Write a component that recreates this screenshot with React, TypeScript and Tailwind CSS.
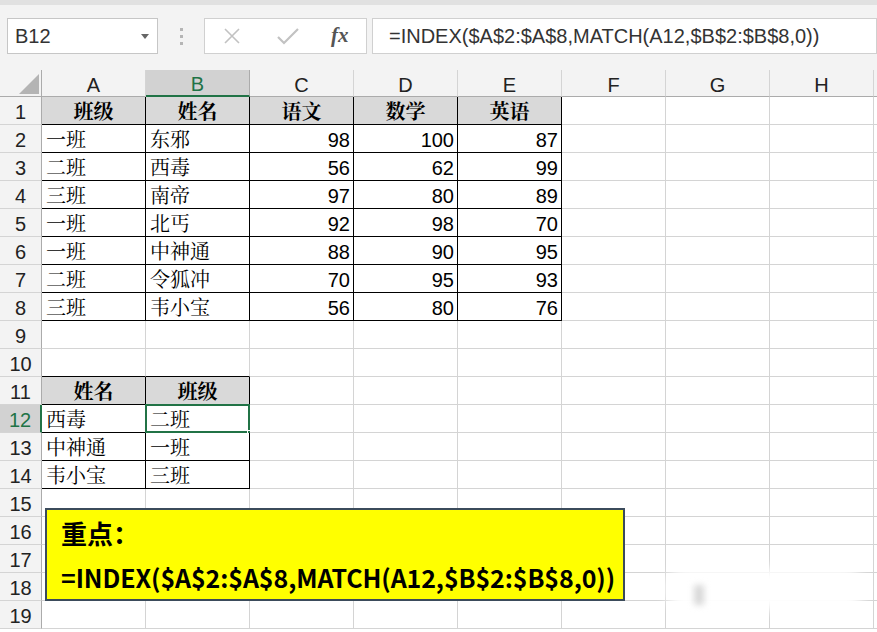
import React from 'react';

const COLS = ['A', 'B', 'C', 'D', 'E', 'F', 'G', 'H'];

type Cell = { v: string; num?: boolean; head?: boolean };

// row number -> cells from column A
const DATA: Record<number, Cell[]> = {
  1: [{ v: '班级', head: true }, { v: '姓名', head: true }, { v: '语文', head: true }, { v: '数学', head: true }, { v: '英语', head: true }],
  2: [{ v: '一班' }, { v: '东邪' }, { v: '98', num: true }, { v: '100', num: true }, { v: '87', num: true }],
  3: [{ v: '二班' }, { v: '西毒' }, { v: '56', num: true }, { v: '62', num: true }, { v: '99', num: true }],
  4: [{ v: '三班' }, { v: '南帝' }, { v: '97', num: true }, { v: '80', num: true }, { v: '89', num: true }],
  5: [{ v: '一班' }, { v: '北丐' }, { v: '92', num: true }, { v: '98', num: true }, { v: '70', num: true }],
  6: [{ v: '一班' }, { v: '中神通' }, { v: '88', num: true }, { v: '90', num: true }, { v: '95', num: true }],
  7: [{ v: '二班' }, { v: '令狐冲' }, { v: '70', num: true }, { v: '95', num: true }, { v: '93', num: true }],
  8: [{ v: '三班' }, { v: '韦小宝' }, { v: '56', num: true }, { v: '80', num: true }, { v: '76', num: true }],
  11: [{ v: '姓名', head: true }, { v: '班级', head: true }],
  12: [{ v: '西毒' }, { v: '二班' }],
  13: [{ v: '中神通' }, { v: '一班' }],
  14: [{ v: '韦小宝' }, { v: '三班' }],
};

const inTable = (r: number, c: number) =>
  (r >= 1 && r <= 8 && c >= 0 && c <= 4) || (r >= 11 && r <= 14 && c >= 0 && c <= 1);

const cellFont = { fontFamily: '"Liberation Sans", "Noto Serif CJK SC", "Noto Sans CJK SC", sans-serif' };

function GridCell({ r, c }: { r: number; c: number }) {
  const cell = DATA[r]?.[c];
  const right = inTable(r, c) || inTable(r, c + 1) ? 'border-r-black' : 'border-r-[#d4d4d4]';
  const bottom = inTable(r, c) || inTable(r + 1, c) ? 'border-b-black' : 'border-b-[#d4d4d4]';
  const fill = cell?.head ? 'bg-[#d9d9d9]' : 'bg-white';
  const selected = r === 12 && c === 1;
  return (
    <div
      className={`relative h-[28px] pt-[3px] border-r border-b ${right} ${bottom} ${fill} flex items-center text-[20px] text-black leading-none ${
        cell?.num ? 'justify-end pr-[3px]' : cell?.head ? 'justify-center font-bold' : 'pl-[4px]'
      }`}
      style={cellFont}
    >
      {cell?.v}
      {selected && (
        <>
          <div className="absolute -left-px -top-px w-[105px] h-[29px] border-2 border-[#217346]" />
          <div className="absolute -right-[4px] -bottom-[4px] w-[6px] h-[6px] bg-[#217346] border border-white" />
        </>
      )}
    </div>
  );
}

function FormulaBar() {
  return (
    <div className="h-[70px] bg-[#f3f3f3] border-t-[5px] border-[#e1e1e1] flex items-start pt-[13px] pl-[7px]">
      <div className="w-[151px] h-[36px] bg-white border border-[#c6c6c6] flex items-center justify-between pl-[7px] pr-[8px]">
        <span className="text-[20px] text-[#333]" style={{ fontFamily: '"Liberation Sans", sans-serif' }}>B12</span>
        <svg width="8" height="5" viewBox="0 0 8 5"><path d="M0 0 L8 0 L4 5 Z" fill="#666" /></svg>
      </div>
      <div className="w-[46px] h-[36px] flex flex-col items-center justify-center gap-[4px]">
        <div className="w-[3px] h-[3px] bg-[#b5b5b5]" />
        <div className="w-[3px] h-[3px] bg-[#b5b5b5]" />
        <div className="w-[3px] h-[3px] bg-[#b5b5b5]" />
      </div>
      <div className="w-[163px] h-[36px] bg-white border border-[#d0d0d0] flex items-center">
        <svg className="ml-[17px]" width="20" height="20" viewBox="0 0 20 20">
          <path d="M3 3 L17 17 M17 3 L3 17" stroke="#c2c2c2" strokeWidth="1.6" />
        </svg>
        <svg className="ml-[34px]" width="24" height="20" viewBox="0 0 24 20">
          <path d="M2 11 L8 17 L22 3" stroke="#c2c2c2" strokeWidth="2.2" fill="none" />
        </svg>
        <span
          className="ml-[31px] text-[21px] italic font-bold text-[#555]"
          style={{ fontFamily: '"Liberation Serif", serif' }}
        >
          fx
        </span>
      </div>
      <div className="ml-[5px] flex-1 h-[36px] bg-white border border-[#d0d0d0] flex items-center pl-[16px]">
        <span className="text-[20px] text-[#333] whitespace-nowrap" style={{ fontFamily: '"Liberation Sans", sans-serif' }}>
          =INDEX($A$2:$A$8,MATCH(A12,$B$2:$B$8,0))
        </span>
      </div>
    </div>
  );
}

export default function App() {
  const rows = Array.from({ length: 19 }, (_, i) => i + 1);
  const hdrFont = { fontFamily: '"Liberation Sans", sans-serif' };
  return (
    <div className="w-[877px] h-[632px] overflow-hidden bg-white">
      <FormulaBar />
      <div className="relative">
        <div className="grid grid-cols-[42px_repeat(8,104px)_3px]">
          {/* header row */}
          <div className="h-[27px] bg-[#f3f3f3] border-r border-b border-[#ababab] flex items-end justify-end pr-[2px] pb-[2px]">
            <svg width="20" height="20" viewBox="0 0 20 20"><path d="M20 0 L20 20 L0 20 Z" fill="#b4b4b4" /></svg>
          </div>
          {COLS.map((c) =>
            c === 'B' ? (
              <div
                key={c}
                className="h-[27px] pt-[3px] bg-[#d2d2d2] border-r border-[#ababab] border-b-2 border-b-[#217346] flex items-center justify-center text-[20px] text-[#217346]"
                style={hdrFont}
              >
                {c}
              </div>
            ) : (
              <div
                key={c}
                className="h-[27px] pt-[3px] bg-[#f3f3f3] border-r border-r-[#d4d4d4] border-b border-b-[#ababab] flex items-center justify-center text-[20px] text-[#222]"
                style={hdrFont}
              >
                {c}
              </div>
            )
          )}
          <div className="h-[27px] bg-[#f3f3f3] border-b border-[#ababab]" />

          {rows.map((r) => (
            <React.Fragment key={r}>
              {r === 12 ? (
                <div
                  className="h-[28px] pt-[3px] bg-[#d2d2d2] border-r-2 border-r-[#217346] border-b border-b-[#d4d4d4] flex items-center justify-center text-[20px] text-[#217346]"
                  style={hdrFont}
                >
                  {r}
                </div>
              ) : (
                <div
                  className="h-[28px] pt-[3px] bg-[#f3f3f3] border-r border-r-[#ababab] border-b border-b-[#d4d4d4] flex items-center justify-center text-[20px] text-[#222]"
                  style={hdrFont}
                >
                  {r}
                </div>
              )}
              {COLS.map((_, c) => (
                <GridCell key={c} r={r} c={c} />
              ))}
              <div className="h-[28px] border-b border-[#d4d4d4]" />
            </React.Fragment>
          ))}
        </div>

        {/* floating note shape */}
        <div
          className="absolute left-[45px] top-[438px] w-[580px] h-[93px] bg-[#ffff00] border-2 border-[#3b4b5b] flex flex-col justify-center pl-[14px] gap-[14px] font-bold text-black"
          style={{ fontFamily: '"Noto Sans CJK SC", sans-serif' }}
        >
          <div className="text-[26px] leading-[30px]">重点：</div>
          <div className="text-[25px] leading-[30px] whitespace-nowrap tracking-[-0.1px]">=INDEX($A$2:$A$8,MATCH(A12,$B$2:$B$8,0))</div>
        </div>

        {/* blurred watermark patch */}
        <div className="absolute left-[665px] top-[498px] w-[200px] h-[42px] bg-white rounded-full blur-[6px]" />
        <div className="absolute left-[694px] top-[515px] w-[10px] h-[20px] bg-[#d8d8d8] blur-[3px]" />
      </div>
    </div>
  );
}
